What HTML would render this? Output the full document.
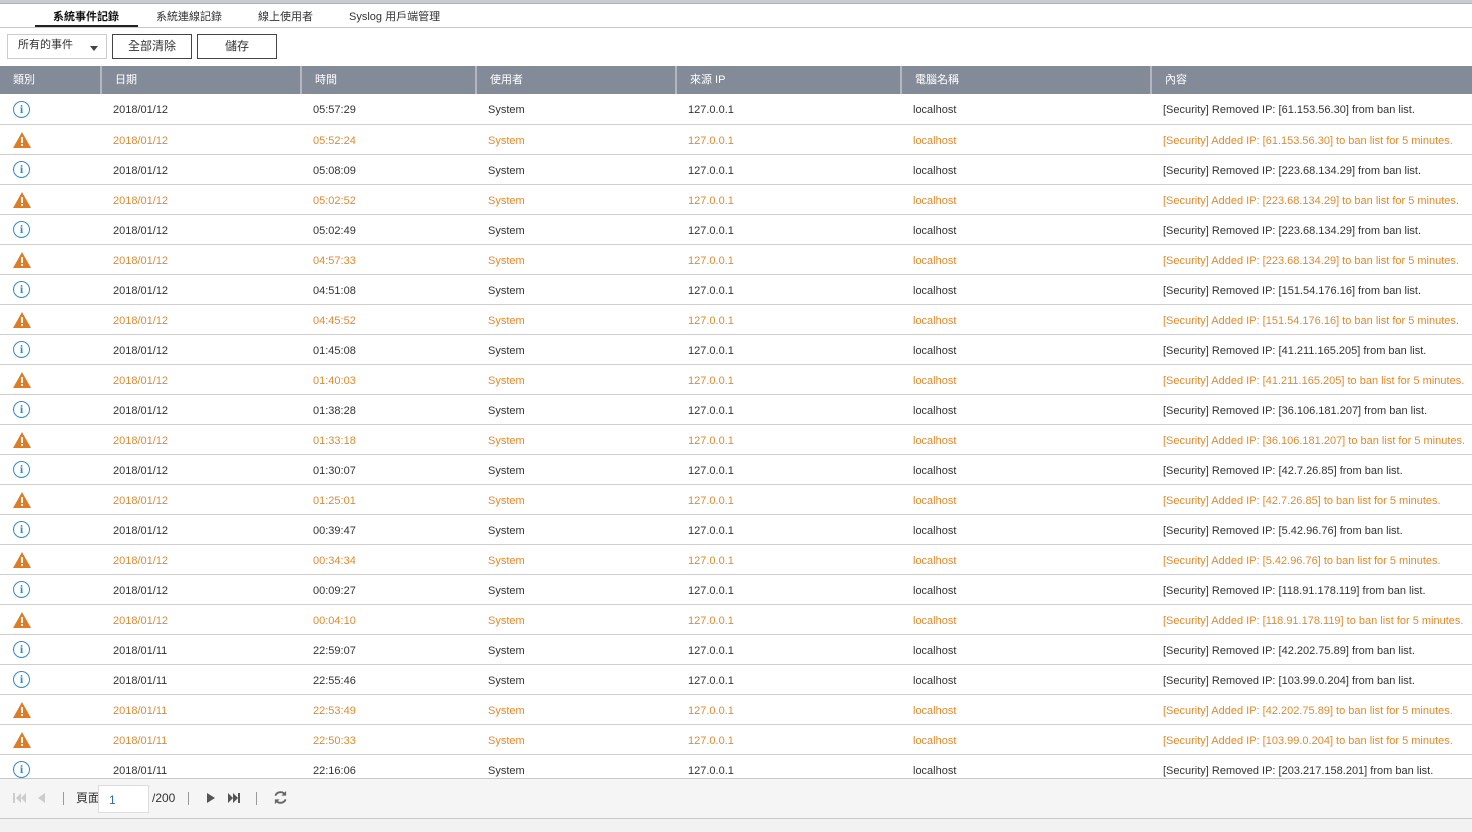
<!DOCTYPE html>
<html><head><meta charset="utf-8"><style>
*{margin:0;padding:0;box-sizing:border-box}
body{width:1472px;height:832px;background:#f2f2f2;font-family:"Liberation Sans","Noto Sans CJK TC",sans-serif;font-size:11px;color:#333;position:relative;overflow:hidden}
.top{position:absolute;left:0;top:0;width:1472px;height:4px;background:#c9ccd1;border-bottom:1px solid #aeb2b8}
.panel{position:absolute;left:0;top:4px;width:1472px;height:815px;background:#fff;border-bottom:1px solid #c8c8c8}
.tabs{position:absolute;top:4px;left:0;width:1472px;height:24px;border-bottom:1px solid #c8c8c8}
.tab{position:absolute;top:4px;font-size:11px;color:#333}
.tab.a{font-weight:bold;color:#111}
.ul{position:absolute;left:35px;top:21px;width:103px;height:2px;background:#222}
.btn{position:absolute;top:34px;height:25px;border:1px solid #444;background:#fff;font-size:12px;text-align:center;line-height:23px}
.sel{position:absolute;left:7px;top:34px;width:100px;height:25px;border:1px solid #ccc;background:#fff;font-size:11px;padding-left:10px;line-height:21px}
.sel:after{content:"";position:absolute;right:8px;top:11px;border-left:4px solid transparent;border-right:4px solid transparent;border-top:5px solid #444}
table{position:absolute;left:0;top:66px;border-collapse:collapse;table-layout:fixed;width:1472px}
th{background:#848b98;color:#fff;font-weight:normal;text-align:left;height:28px;padding:0 0 2px 13px;border-left:2px solid #b3b8c0;font-size:11px}
th:first-child{border-left:none}
td{height:30px;border-bottom:1px solid #cfcfcf;padding:3px 0 0 12px;white-space:nowrap;overflow:hidden}
td:first-child{padding-left:13px;padding-top:1px}
tr.w td{color:#e08a2a}
.i{display:inline-block;width:17px;height:17px;border:1.8px solid #2a8ad4;border-radius:50%;color:#2a8ad4;font-weight:bold;font-size:12px;text-align:center;line-height:14px;font-family:"Liberation Serif",serif;vertical-align:middle}
.t{display:inline-block;vertical-align:middle;width:18px;height:16px}
.foot{position:absolute;left:0;top:778px;width:1472px;height:41px;background:#f5f5f5;border-top:1px solid #c8c8c8;border-bottom:1px solid #c8c8c8}
.f{position:absolute;top:0;line-height:38px;font-size:12px}
.sep{position:absolute;top:13px;width:1px;height:13px;background:#999}
.inp{position:absolute;left:98px;top:6px;width:51px;height:28px;background:#fff;border:1px solid #ddd;color:#2a6fb0;padding-left:10px;line-height:28px;font-size:12px}
</style></head><body>
<div class="panel"></div>
<div class="top"></div>
<div class="tabs">
<span class="tab a" style="left:53px">系統事件記錄</span>
<span class="tab" style="left:156px">系統連線記錄</span>
<span class="tab" style="left:258px">線上使用者</span>
<span class="tab" style="left:349px">Syslog 用戶端管理</span>
<div class="ul"></div>
</div>
<div class="sel">所有的事件</div>
<div class="btn" style="left:112px;width:80px">全部清除</div>
<div class="btn" style="left:197px;width:80px">儲存</div>
<table>
<colgroup><col style="width:101px"><col style="width:200px"><col style="width:175px"><col style="width:200px"><col style="width:225px"><col style="width:250px"><col style="width:321px"></colgroup>
<tr><th>類別</th><th>日期</th><th>時間</th><th>使用者</th><th>來源 IP</th><th>電腦名稱</th><th>內容</th></tr>
<tr><td><span class="i">i</span></td><td>2018/01/12</td><td>05:57:29</td><td>System</td><td>127.0.0.1</td><td>localhost</td><td>[Security] Removed IP: [61.153.56.30] from ban list.</td></tr>
<tr class="w"><td><svg class="t" viewBox="0 0 18 16"><path d="M9 0L18 16H0Z" fill="#e07b20"/><rect x="8" y="5" width="2" height="6" fill="#fff"/><rect x="8" y="12" width="2" height="2" fill="#fff"/></svg></td><td>2018/01/12</td><td>05:52:24</td><td>System</td><td>127.0.0.1</td><td>localhost</td><td>[Security] Added IP: [61.153.56.30] to ban list for 5 minutes.</td></tr>
<tr><td><span class="i">i</span></td><td>2018/01/12</td><td>05:08:09</td><td>System</td><td>127.0.0.1</td><td>localhost</td><td>[Security] Removed IP: [223.68.134.29] from ban list.</td></tr>
<tr class="w"><td><svg class="t" viewBox="0 0 18 16"><path d="M9 0L18 16H0Z" fill="#e07b20"/><rect x="8" y="5" width="2" height="6" fill="#fff"/><rect x="8" y="12" width="2" height="2" fill="#fff"/></svg></td><td>2018/01/12</td><td>05:02:52</td><td>System</td><td>127.0.0.1</td><td>localhost</td><td>[Security] Added IP: [223.68.134.29] to ban list for 5 minutes.</td></tr>
<tr><td><span class="i">i</span></td><td>2018/01/12</td><td>05:02:49</td><td>System</td><td>127.0.0.1</td><td>localhost</td><td>[Security] Removed IP: [223.68.134.29] from ban list.</td></tr>
<tr class="w"><td><svg class="t" viewBox="0 0 18 16"><path d="M9 0L18 16H0Z" fill="#e07b20"/><rect x="8" y="5" width="2" height="6" fill="#fff"/><rect x="8" y="12" width="2" height="2" fill="#fff"/></svg></td><td>2018/01/12</td><td>04:57:33</td><td>System</td><td>127.0.0.1</td><td>localhost</td><td>[Security] Added IP: [223.68.134.29] to ban list for 5 minutes.</td></tr>
<tr><td><span class="i">i</span></td><td>2018/01/12</td><td>04:51:08</td><td>System</td><td>127.0.0.1</td><td>localhost</td><td>[Security] Removed IP: [151.54.176.16] from ban list.</td></tr>
<tr class="w"><td><svg class="t" viewBox="0 0 18 16"><path d="M9 0L18 16H0Z" fill="#e07b20"/><rect x="8" y="5" width="2" height="6" fill="#fff"/><rect x="8" y="12" width="2" height="2" fill="#fff"/></svg></td><td>2018/01/12</td><td>04:45:52</td><td>System</td><td>127.0.0.1</td><td>localhost</td><td>[Security] Added IP: [151.54.176.16] to ban list for 5 minutes.</td></tr>
<tr><td><span class="i">i</span></td><td>2018/01/12</td><td>01:45:08</td><td>System</td><td>127.0.0.1</td><td>localhost</td><td>[Security] Removed IP: [41.211.165.205] from ban list.</td></tr>
<tr class="w"><td><svg class="t" viewBox="0 0 18 16"><path d="M9 0L18 16H0Z" fill="#e07b20"/><rect x="8" y="5" width="2" height="6" fill="#fff"/><rect x="8" y="12" width="2" height="2" fill="#fff"/></svg></td><td>2018/01/12</td><td>01:40:03</td><td>System</td><td>127.0.0.1</td><td>localhost</td><td>[Security] Added IP: [41.211.165.205] to ban list for 5 minutes.</td></tr>
<tr><td><span class="i">i</span></td><td>2018/01/12</td><td>01:38:28</td><td>System</td><td>127.0.0.1</td><td>localhost</td><td>[Security] Removed IP: [36.106.181.207] from ban list.</td></tr>
<tr class="w"><td><svg class="t" viewBox="0 0 18 16"><path d="M9 0L18 16H0Z" fill="#e07b20"/><rect x="8" y="5" width="2" height="6" fill="#fff"/><rect x="8" y="12" width="2" height="2" fill="#fff"/></svg></td><td>2018/01/12</td><td>01:33:18</td><td>System</td><td>127.0.0.1</td><td>localhost</td><td>[Security] Added IP: [36.106.181.207] to ban list for 5 minutes.</td></tr>
<tr><td><span class="i">i</span></td><td>2018/01/12</td><td>01:30:07</td><td>System</td><td>127.0.0.1</td><td>localhost</td><td>[Security] Removed IP: [42.7.26.85] from ban list.</td></tr>
<tr class="w"><td><svg class="t" viewBox="0 0 18 16"><path d="M9 0L18 16H0Z" fill="#e07b20"/><rect x="8" y="5" width="2" height="6" fill="#fff"/><rect x="8" y="12" width="2" height="2" fill="#fff"/></svg></td><td>2018/01/12</td><td>01:25:01</td><td>System</td><td>127.0.0.1</td><td>localhost</td><td>[Security] Added IP: [42.7.26.85] to ban list for 5 minutes.</td></tr>
<tr><td><span class="i">i</span></td><td>2018/01/12</td><td>00:39:47</td><td>System</td><td>127.0.0.1</td><td>localhost</td><td>[Security] Removed IP: [5.42.96.76] from ban list.</td></tr>
<tr class="w"><td><svg class="t" viewBox="0 0 18 16"><path d="M9 0L18 16H0Z" fill="#e07b20"/><rect x="8" y="5" width="2" height="6" fill="#fff"/><rect x="8" y="12" width="2" height="2" fill="#fff"/></svg></td><td>2018/01/12</td><td>00:34:34</td><td>System</td><td>127.0.0.1</td><td>localhost</td><td>[Security] Added IP: [5.42.96.76] to ban list for 5 minutes.</td></tr>
<tr><td><span class="i">i</span></td><td>2018/01/12</td><td>00:09:27</td><td>System</td><td>127.0.0.1</td><td>localhost</td><td>[Security] Removed IP: [118.91.178.119] from ban list.</td></tr>
<tr class="w"><td><svg class="t" viewBox="0 0 18 16"><path d="M9 0L18 16H0Z" fill="#e07b20"/><rect x="8" y="5" width="2" height="6" fill="#fff"/><rect x="8" y="12" width="2" height="2" fill="#fff"/></svg></td><td>2018/01/12</td><td>00:04:10</td><td>System</td><td>127.0.0.1</td><td>localhost</td><td>[Security] Added IP: [118.91.178.119] to ban list for 5 minutes.</td></tr>
<tr><td><span class="i">i</span></td><td>2018/01/11</td><td>22:59:07</td><td>System</td><td>127.0.0.1</td><td>localhost</td><td>[Security] Removed IP: [42.202.75.89] from ban list.</td></tr>
<tr><td><span class="i">i</span></td><td>2018/01/11</td><td>22:55:46</td><td>System</td><td>127.0.0.1</td><td>localhost</td><td>[Security] Removed IP: [103.99.0.204] from ban list.</td></tr>
<tr class="w"><td><svg class="t" viewBox="0 0 18 16"><path d="M9 0L18 16H0Z" fill="#e07b20"/><rect x="8" y="5" width="2" height="6" fill="#fff"/><rect x="8" y="12" width="2" height="2" fill="#fff"/></svg></td><td>2018/01/11</td><td>22:53:49</td><td>System</td><td>127.0.0.1</td><td>localhost</td><td>[Security] Added IP: [42.202.75.89] to ban list for 5 minutes.</td></tr>
<tr class="w"><td><svg class="t" viewBox="0 0 18 16"><path d="M9 0L18 16H0Z" fill="#e07b20"/><rect x="8" y="5" width="2" height="6" fill="#fff"/><rect x="8" y="12" width="2" height="2" fill="#fff"/></svg></td><td>2018/01/11</td><td>22:50:33</td><td>System</td><td>127.0.0.1</td><td>localhost</td><td>[Security] Added IP: [103.99.0.204] to ban list for 5 minutes.</td></tr>
<tr><td><span class="i">i</span></td><td>2018/01/11</td><td>22:16:06</td><td>System</td><td>127.0.0.1</td><td>localhost</td><td>[Security] Removed IP: [203.217.158.201] from ban list.</td></tr>
</table>
<div class="foot">
<svg style="position:absolute;left:13px;top:13px" width="32" height="12" viewBox="0 0 32 12"><g fill="#ccc"><rect x="0" y="1" width="2" height="10"/><path d="M8 1V11L3 6Z"/><path d="M13 1V11L8 6Z"/><path d="M32 1V11L25 6Z"/></g></svg>
<div class="sep" style="left:63px"></div>
<span class="f" style="left:76px">頁面</span>
<div class="inp">1</div>
<span class="f" style="left:152px">/200</span>
<div class="sep" style="left:188px"></div>
<svg style="position:absolute;left:206px;top:13px" width="36" height="12" viewBox="0 0 36 12"><g fill="#555"><path d="M1 1V11L9 6Z"/><path d="M22 1V11L27 6Z"/><path d="M27 1V11L32 6Z"/><rect x="32" y="1" width="2" height="10"/></g></svg>
<div class="sep" style="left:256px"></div>
<svg style="position:absolute;left:273px;top:11px" width="15" height="15" viewBox="0 0 16 16"><path d="M13 5A6 6 0 0 0 2.5 6M3 11A6 6 0 0 0 13.5 10" fill="none" stroke="#666" stroke-width="2"/><path d="M14 1V6H9Z M2 15V10H7Z" fill="#666"/></svg>
</div>
</body></html>
